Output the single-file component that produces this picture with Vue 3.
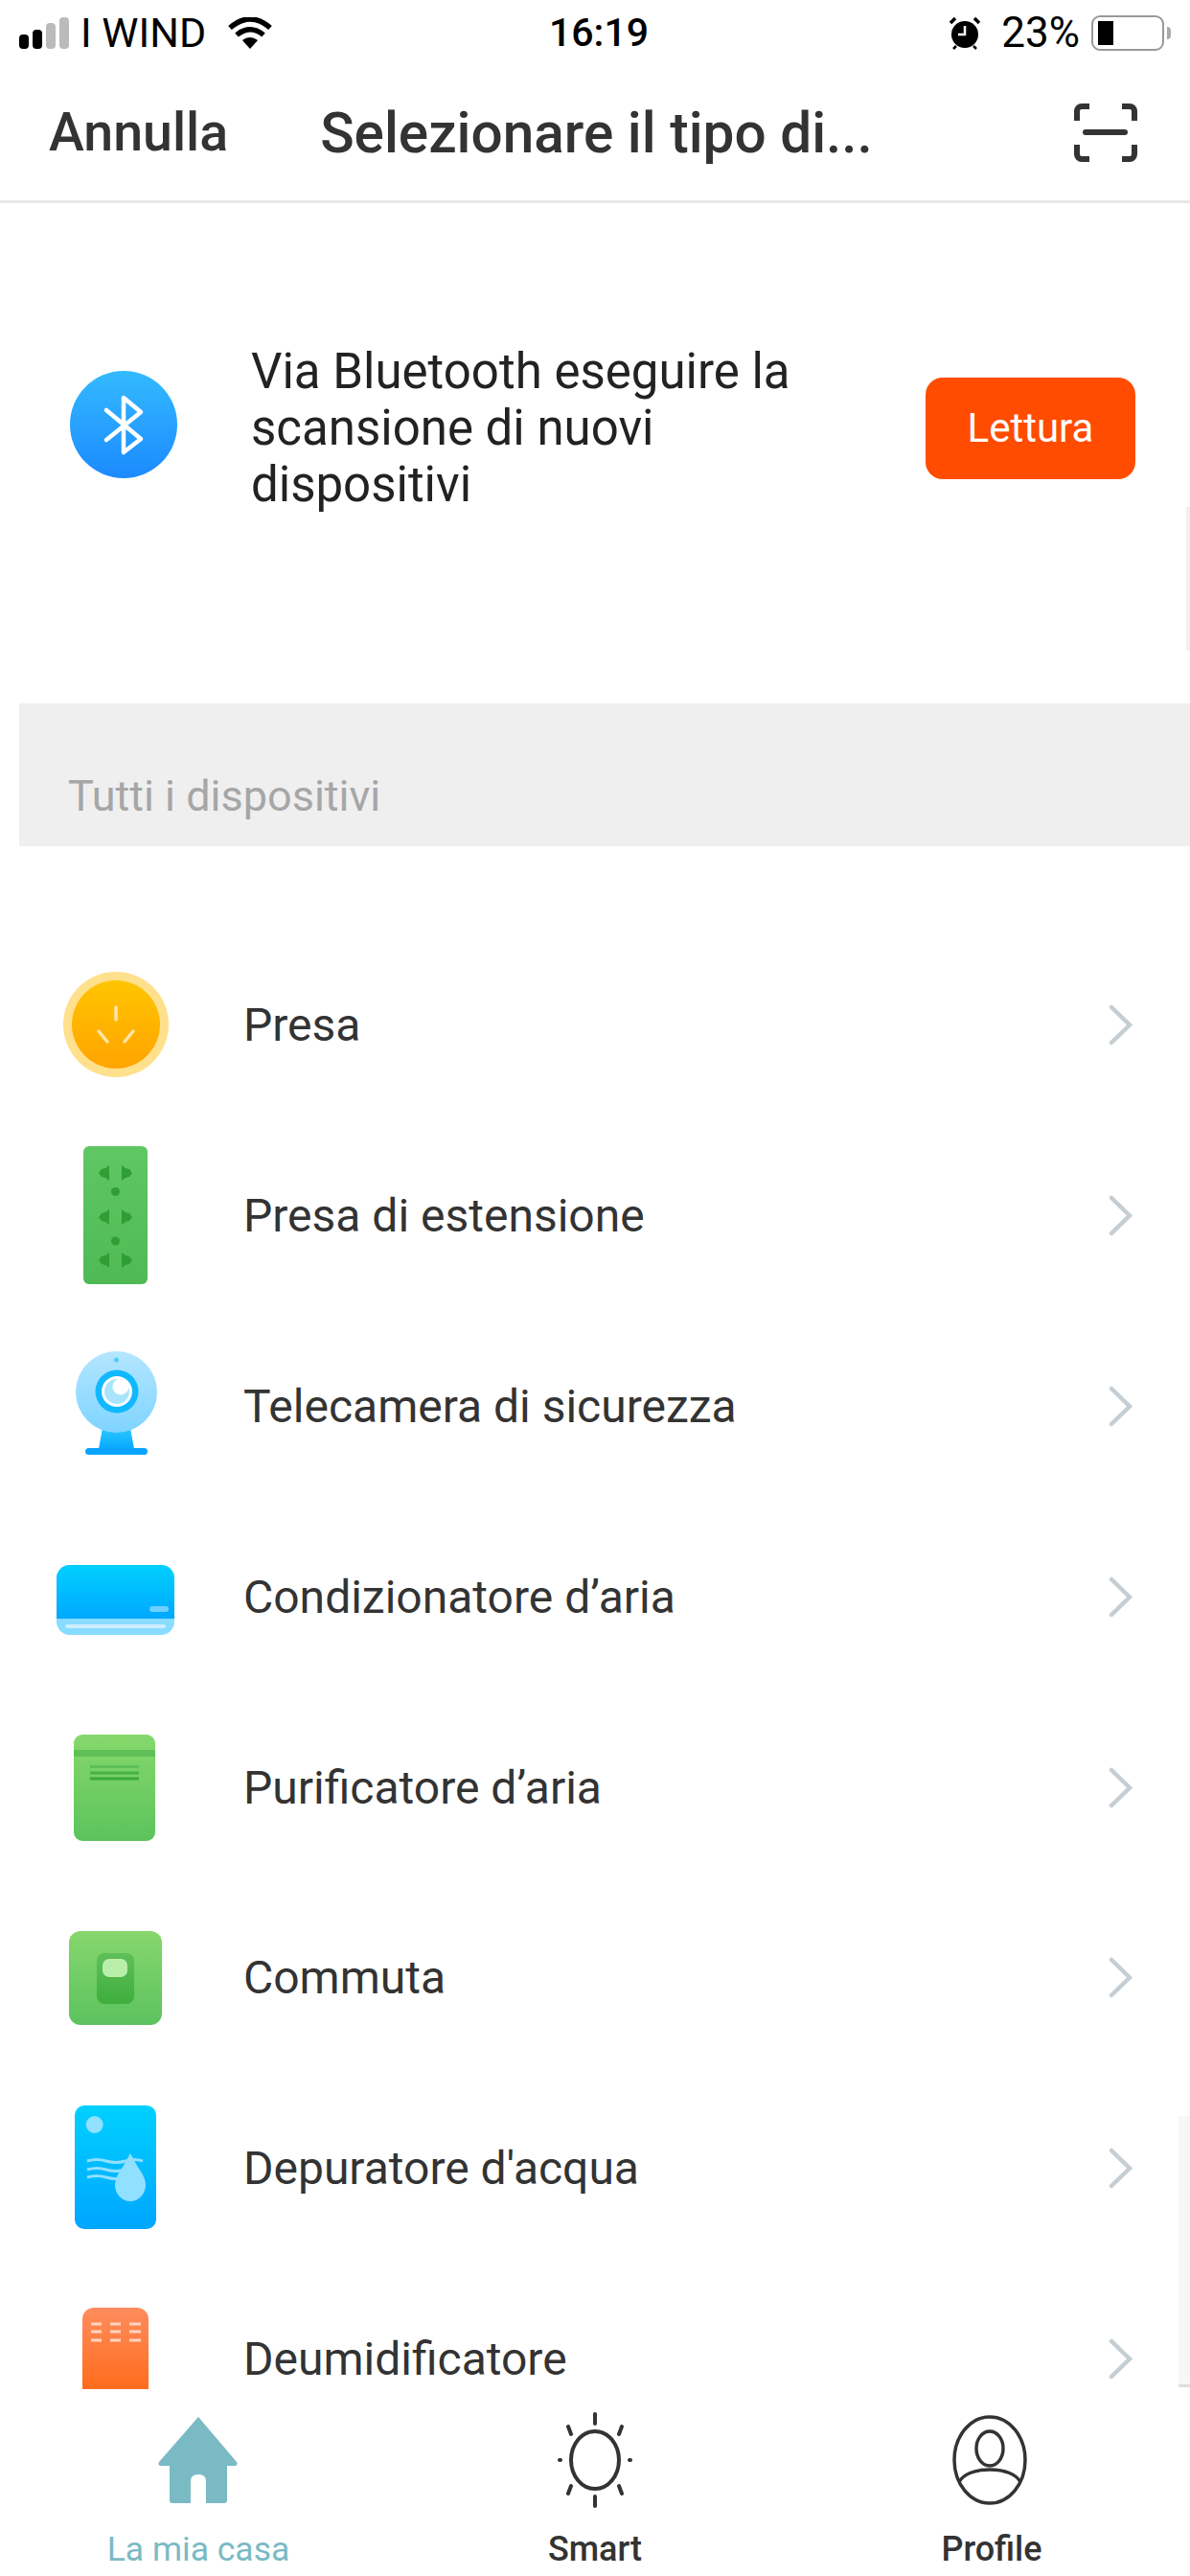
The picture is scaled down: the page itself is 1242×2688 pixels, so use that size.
<template>
  <div class="phone">
    <div class="status">
      <div class="status_left">
        <div class="signal">
          <i v-for="bar in signalBars" :key="bar.h" :class="{ off: bar.off }" :style="{ height: bar.h + 'px' }"></i>
        </div>
        <span class="carrier">I WIND</span>
        <svg class="wifi" width="48" height="33" viewBox="0 0 48 33">
          <path d="M3 11Q24-7 45 11M10 18.500Q24 7 38 18.500" fill="none" stroke="#000" stroke-width="5.500" />
          <path d="M16 24Q24 18 32 24L24 33Z" fill="#000" />
        </svg>
      </div>
      <span class="time">16:19</span>
      <div class="status_right">
        <svg class="alarm" width="36" height="36" viewBox="0 0 36 36">
          <circle cx="18" cy="20" r="14" fill="#000" />
          <path d="M18 11V20H11" fill="none" stroke="#fff" stroke-width="2.500" />
          <path d="M3 8 8 3M33 8 28 3" stroke="#000" stroke-width="3.500" />
          <path d="M9 32 6 35M27 32 30 35" stroke="#000" stroke-width="2.500" />
        </svg>
        <span class="percent">23%</span>
        <div class="battery"><i></i></div>
        <div class="battery_nub"></div>
      </div>
    </div>

    <div class="nav">
      <span class="nav_cancel">Annulla</span>
      <span class="nav_title">Selezionare il tipo di...</span>
      <svg class="nav_scan" width="66" height="61" viewBox="0 0 66 61">
        <path d="M3 18V8a5 5 0 0 1 5-5H16M50 3H58a5 5 0 0 1 5 5V18M3 43V53a5 5 0 0 0 5 5H16M50 58H58a5 5 0 0 0 5-5V43" fill="none" stroke="#333" stroke-width="6" />
        <path d="M12 30H53" stroke="#333" stroke-width="6" stroke-linecap="round" />
      </svg>
    </div>

    <div class="content">
      <div class="banner">
        <div class="banner_row">
          <svg class="bt" width="112" height="112" viewBox="0 0 112 112">
            <defs>
              <linearGradient id="btBg" x1="0" y1="0" x2="0" y2="1">
                <stop offset="0" stop-color="#33baff" />
                <stop offset="1" stop-color="#1c8aff" />
              </linearGradient>
            </defs>
            <circle cx="56" cy="56" r="56" fill="url(#btBg)" />
            <path d="M38 41 74 71 56 85V28L74 43 38 72" fill="none" stroke="#fff" stroke-width="4.500" stroke-linejoin="round" stroke-linecap="round" />
          </svg>
          <p class="banner_text">Via Bluetooth eseguire la scansione di nuovi dispositivi</p>
          <div class="banner_btn">Lettura</div>
        </div>
      </div>

      <div class="band"><span>Tutti i dispositivi</span></div>

      <div class="list">
        <div v-for="item in devices" :key="item.name" class="row">
          <svg class="row_icon" width="130" height="170" viewBox="0 0 130 170">
            <template v-if="item.icon === 'plug'">
              <defs>
                <linearGradient id="plugBg" x1="0" y1="0" x2="0" y2="1">
                  <stop offset="0" stop-color="#ffc400" />
                  <stop offset="1" stop-color="#ffa400" />
                </linearGradient>
              </defs>
              <circle cx="65" cy="85" r="55" fill="#ffe08c" />
              <circle cx="65" cy="85" r="46" fill="url(#plugBg)" />
              <path d="M65 67V80M47 92 56 103M83 92 74 103" stroke="#ffe6a8" stroke-width="3.500" stroke-linecap="round" />
            </template>

            <template v-else-if="item.icon === 'strip'">
              <defs>
                <linearGradient id="stripBg" x1="0" y1="0" x2="0" y2="1">
                  <stop offset="0" stop-color="#5fc763" />
                  <stop offset="1" stop-color="#4fba53" />
                </linearGradient>
              </defs>
              <rect x="31" y="13" width="67" height="144" rx="6" fill="url(#stripBg)" />
              <g v-for="y in [41, 87, 132]" :key="y" :transform="`translate(0 ${y})`" fill="#2f9e35">
                <path d="M58-8V8L54 5 50 4 47 0 50-4 54-5Z" />
                <path d="M71-8V8L75 5 79 4 82 0 79-4 75-5Z" />
              </g>
              <circle cx="64.500" cy="60.500" r="4.500" fill="#2f9e35" />
              <circle cx="64.500" cy="112" r="4.500" fill="#2f9e35" />
            </template>

            <template v-else-if="item.icon === 'camera'">
              <defs>
                <linearGradient id="camBg" x1="0" y1="0" x2="0" y2="1">
                  <stop offset="0" stop-color="#b4e6ff" />
                  <stop offset="1" stop-color="#7fd4ff" />
                </linearGradient>
                <linearGradient id="camFoot" x1="0" y1="0" x2="0" y2="1">
                  <stop offset="0" stop-color="#2cc6ff" />
                  <stop offset="1" stop-color="#08aaff" />
                </linearGradient>
              </defs>
              <path d="M51 108H80L84 130H47Z" fill="url(#camFoot)" />
              <rect x="33" y="129" width="65" height="7" rx="3.500" fill="#0aa4ff" />
              <circle cx="65.500" cy="70.500" r="42.500" fill="url(#camBg)" />
              <circle cx="65.500" cy="37" r="2.500" fill="#55c8ff" />
              <circle cx="66" cy="70" r="22.500" fill="#10b8ff" />
              <circle cx="66" cy="70" r="16" fill="#fff" />
              <circle cx="66" cy="70" r="13" fill="#a8e4fb" />
              <circle cx="70" cy="65" r="8.500" fill="#fff" />
            </template>

            <template v-else-if="item.icon === 'ac'">
              <defs>
                <linearGradient id="acBg" x1="0" y1="0" x2="0" y2="1">
                  <stop offset="0" stop-color="#00d0ff" />
                  <stop offset="1" stop-color="#00a8ff" />
                </linearGradient>
              </defs>
              <rect x="3" y="52" width="123" height="73" rx="14" fill="#88dcff" />
              <path d="M3 108V66a14 14 0 0 1 14-14H112a14 14 0 0 1 14 14V108Z" fill="url(#acBg)" />
              <rect x="12" y="114" width="105" height="4" rx="2" fill="#cdeeff" />
              <rect x="100" y="95" width="20" height="6" rx="3" fill="#6dd0ff" />
            </template>

            <template v-else-if="item.icon === 'purifier'">
              <defs>
                <linearGradient id="purBg" x1="0" y1="0" x2="0" y2="1">
                  <stop offset="0" stop-color="#86d86c" />
                  <stop offset="1" stop-color="#5cc35c" />
                </linearGradient>
              </defs>
              <rect x="21" y="30" width="85" height="111" rx="9" fill="url(#purBg)" />
              <rect x="21" y="46" width="85" height="7" fill="#5fc058" />
              <path d="M38 63.500H89" stroke="#5cbf55" stroke-width="3" />
              <path d="M38 70H89" stroke="#46b244" stroke-width="3" />
              <path d="M38 76H89" stroke="#3aa83c" stroke-width="3" />
            </template>

            <template v-else-if="item.icon === 'switch'">
              <defs>
                <linearGradient id="swBg" x1="0" y1="0" x2="0" y2="1">
                  <stop offset="0" stop-color="#86d76d" />
                  <stop offset="1" stop-color="#5cc25e" />
                </linearGradient>
                <linearGradient id="swIn" x1="0" y1="0" x2="0" y2="1">
                  <stop offset="0" stop-color="#5fbf5a" />
                  <stop offset="1" stop-color="#3eae3e" />
                </linearGradient>
              </defs>
              <rect x="16" y="36" width="97" height="98" rx="12" fill="url(#swBg)" />
              <rect x="45" y="59" width="39" height="53" rx="8" fill="url(#swIn)" />
              <rect x="51" y="65" width="26" height="19" rx="7" fill="#b9efaa" />
            </template>

            <template v-else-if="item.icon === 'water'">
              <defs>
                <linearGradient id="waterBg" x1="0" y1="0" x2="0" y2="1">
                  <stop offset="0" stop-color="#00d0ff" />
                  <stop offset="1" stop-color="#00a6ff" />
                </linearGradient>
              </defs>
              <rect x="22" y="19" width="85" height="129" rx="10" fill="url(#waterBg)" />
              <circle cx="42.700" cy="39" r="9" fill="#90e0ff" />
              <path d="M35 77Q45 74 55 77T75 77T93 77M35 86Q45 83 55 86T75 86M35 94Q45 91 55 94T72 94" fill="none" stroke="#90e0ff" stroke-width="3" />
              <path d="M80 69 85 78C87 83 96 92 96 102A16 17 0 0 1 64 102C64 92 73 83 75 78Z" fill="#90e0ff" />
            </template>

            <template v-else-if="item.icon === 'dehum'">
              <defs>
                <linearGradient id="dehumBg" gradientUnits="userSpaceOnUse" x1="0" y1="31" x2="0" y2="116">
                  <stop offset="0" stop-color="#ff8c5e" />
                  <stop offset="1" stop-color="#ff6c1c" />
                </linearGradient>
              </defs>
              <rect x="30" y="31" width="69" height="160" rx="12" fill="url(#dehumBg)" />
              <path d="M39 48H50M59 48H70M79 48H91M39 56H50M59 56H70M79 56H91M39 65H50M59 65H70M79 65H91" stroke="#ffd5c0" stroke-width="3" />
            </template>
          </svg>
          <span class="row_name">{{ item.name }}</span>
          <svg class="row_arrow" width="25" height="43" viewBox="0 0 25 43">
            <path d="M3 3 22 21.500 3 40" fill="none" stroke="#c5ced3" stroke-width="4.500" stroke-linecap="round" />
          </svg>
        </div>
      </div>
    </div>

    <div class="tabs">
      <div class="tab active">
        <svg width="100" height="100" viewBox="0 0 100 100">
          <path d="M50 5 90 52Q92 56 87 56H80V92Q80 95 77 95H58V72Q58 65 50 65 42 65 42 72V95H23Q20 95 20 92V56H12Q7 56 9 52Z" fill="#7abac4" />
        </svg>
        <span>La mia casa</span>
      </div>
      <div class="tab">
        <svg width="100" height="100" viewBox="0 0 100 100" fill="none" stroke="#333" stroke-width="4" stroke-linecap="round">
          <ellipse cx="50" cy="50" rx="25" ry="30" />
          <path d="M50 2V12M50 88V98M13 50H14M86 50H87M22 15 25 23M78 15 75 23M25 77 22 85M75 77 78 85" />
        </svg>
        <span>Smart</span>
      </div>
      <div class="tab">
        <svg width="100" height="100" viewBox="0 0 100 100" fill="none" stroke="#333" stroke-width="3.500">
          <ellipse cx="48" cy="50" rx="37" ry="45" />
          <ellipse cx="48" cy="38" rx="14" ry="18" />
          <path d="M16 73C20 65 32 60 48 60 64 60 76 65 80 73" />
        </svg>
        <span>Profile</span>
      </div>
    </div>

    <div class="edge edge_top"></div>
    <div class="edge edge_bottom"></div>
  </div>
</template>

<script setup>
const signalBars = [
  { h: 15 },
  { h: 20 },
  { h: 27, off: true },
  { h: 33, off: true },
]

const devices = [
  { name: 'Presa', icon: 'plug' },
  { name: 'Presa di estensione', icon: 'strip' },
  { name: 'Telecamera di sicurezza', icon: 'camera' },
  { name: 'Condizionatore d’aria', icon: 'ac' },
  { name: 'Purificatore d’aria', icon: 'purifier' },
  { name: 'Commuta', icon: 'switch' },
  { name: "Depuratore d'acqua", icon: 'water' },
  { name: 'Deumidificatore', icon: 'dehum' },
]
</script>

<style scoped>
.phone {
  position: relative;
  width: 1242px;
  height: 2688px;
  display: flex;
  flex-direction: column;
  overflow: hidden;
  background: #fff;
  font-family: Roboto, "Liberation Sans", sans-serif;
  color: #333;
}

.status {
  height: 68px;
  flex: none;
  display: grid;
  grid-template-columns: 1fr auto 1fr;
  align-items: center;
  padding: 0 20px;
  font-size: 42px;
  color: #000;
}

.status_left,
.status_right {
  display: flex;
  align-items: center;
}

.status_right {
  justify-content: flex-end;
}

.signal {
  display: flex;
  align-items: flex-end;
  gap: 4px;
  height: 33px;
}

.signal i {
  width: 10px;
  border-radius: 4px;
  background: #000;
}

.signal i.off {
  background: #bbb;
}

.carrier {
  margin-left: 12px;
  font-size: 43px;
}

.wifi {
  margin-left: 22px;
}

.time {
  margin-left: 8px;
  font-weight: 500;
  font-size: 41px;
}

.percent {
  margin-left: 20px;
  font-size: 44px;
}

.battery {
  width: 76px;
  height: 37px;
  margin-left: 12px;
  padding: 4px 5px;
  box-sizing: border-box;
  border: 2.5px solid #999;
  border-radius: 9px;
}

.battery i {
  display: block;
  width: 16px;
  height: 100%;
  background: #000;
}

.battery_nub {
  width: 4px;
  height: 13px;
  margin-left: 3px;
  border-radius: 0 4px 4px 0;
  background: #aaa;
}

.nav {
  height: 144px;
  flex: none;
  box-sizing: border-box;
  display: flex;
  align-items: center;
  border-bottom: 3px solid #e6e7ea;
  font-size: 52px;
  font-weight: 500;
}

.nav_cancel {
  margin-left: 51px;
  font-size: 55.5px;
}

.nav_title {
  margin-left: 96px;
  font-size: 58.5px;
}

.nav_scan {
  margin-left: auto;
  margin-right: 55px;
}

.content {
  flex: 1;
  min-height: 0;
  overflow: hidden;
}

.banner {
  height: 522px;
  box-sizing: border-box;
  padding: 146px 57px 0 73px;
}

.banner_row {
  display: flex;
  align-items: center;
}

.bt {
  flex: none;
  margin-bottom: 8px;
}

.banner_text {
  width: 620px;
  margin: 0 0 0 77px;
  font-size: 51px;
  line-height: 59px;
  color: #222;
}

.banner_btn {
  width: 219px;
  height: 106px;
  margin-left: auto;
  display: flex;
  align-items: center;
  justify-content: center;
  border-radius: 18px;
  background: #ff4c00;
  color: #fff;
  font-size: 42px;
}

.band {
  height: 149px;
  margin-left: 20px;
  box-sizing: border-box;
  display: flex;
  align-items: flex-end;
  padding: 0 0 27px 51px;
  background: #efefef;
  color: #a6a6a6;
  font-size: 45px;
  line-height: 50px;
}

.list {
  padding-top: 87px;
}

.row {
  height: 198.9px;
  display: flex;
  align-items: center;
  padding: 0 60px 0 56px;
}

.row_icon {
  flex: none;
}

.row_name {
  margin-left: 68px;
  font-size: 48px;
  color: #333;
}

.row_arrow {
  margin-left: auto;
}

.tabs {
  height: 195px;
  flex: none;
  display: grid;
  grid-template-columns: repeat(3, 1fr);
  background: #fff;
}

.tab {
  display: flex;
  flex-direction: column;
  align-items: center;
  padding-top: 24px;
  font-size: 36px;
  font-weight: 500;
  color: #333;
}

.tab span {
  margin-top: 20px;
  line-height: 46px;
}

.tab.active {
  font-size: 35.5px;
  font-weight: 400;
  color: #7abac4;
}

/* the faint strips along the right edge of the capture */
.edge {
  position: absolute;
  right: 0;
}

.edge_top {
  top: 529px;
  width: 4px;
  height: 150px;
  background: #f0f0f0;
}

.edge_bottom {
  top: 2208px;
  width: 12px;
  height: 283px;
  box-sizing: border-box;
  border-bottom: 3px solid #ddd;
  background: #f7f7f7;
}
</style>
